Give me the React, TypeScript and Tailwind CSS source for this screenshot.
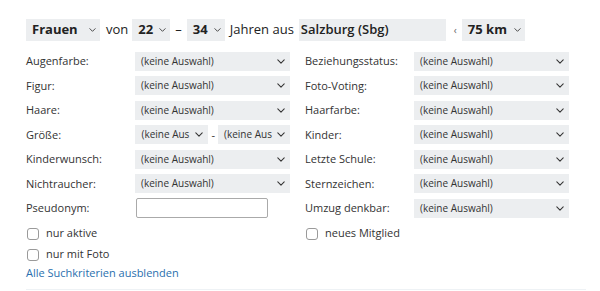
import React from 'react';

const font = { fontFamily: '"Open Sans", "Noto Sans", sans-serif' };

function Chevron({ className = '' }: { className?: string }) {
  return (
    <svg viewBox="0 0 10 6" className={`shrink-0 ${className}`} fill="none">
      <path d="M1 1l4 4 4-4" stroke="#333" strokeWidth="1.3" strokeLinecap="round" strokeLinejoin="round" />
    </svg>
  );
}

function TopSelect({ value, width }: { value: string; width: string }) {
  return (
    <div className={`flex h-[22px] ${width} items-center justify-between bg-[#eceef0] pl-[6px] pr-[4px] text-[13px] font-bold text-[#222]`}>
      <span>{value}</span>
      <Chevron className="w-[7px] h-[4px]" />
    </div>
  );
}

function SmallSelect({ width = 'w-[155px]', text = '(keine Auswahl)' }: { width?: string; text?: string }) {
  return (
    <div className={`flex h-[19px] ${width} items-center justify-between overflow-hidden bg-[#eceef0] pl-[6px] pr-[5px] text-[10px] text-[#333]`}>
      <span className="whitespace-nowrap">{text}</span>
      <Chevron className="w-[8px] h-[5px]" />
    </div>
  );
}

const left = ['Augenfarbe:', 'Figur:', 'Haare:', 'Größe:', 'Kinderwunsch:', 'Nichtraucher:'];
const right = ['Beziehungsstatus:', 'Foto-Voting:', 'Haarfarbe:', 'Kinder:', 'Letzte Schule:', 'Sternzeichen:', 'Umzug denkbar:'];

function Row({ label, children }: { label: string; children: React.ReactNode }) {
  return (
    <div className="flex h-[24.5px] items-center">
      <div className="w-[109px] text-[11px] text-[#333]">{label}</div>
      {children}
    </div>
  );
}

function Check({ label }: { label: string }) {
  return (
    <label className="flex h-[16px] items-center gap-[7px] text-[11px] text-[#333]">
      <span className="ml-[1px] h-[12px] w-[12px] rounded-[3px] border border-[#9a9a9a] bg-white" />
      {label}
    </label>
  );
}

export default function App() {
  return (
    <div style={font} className="w-[600px] h-[291px] bg-white px-[26px] pt-[19px] text-[#333]">
      <div className="flex items-center text-[13px] text-[#222]">
        <TopSelect value="Frauen" width="w-[74px]" />
        <span className="ml-[6px] mr-[4px]">von</span>
        <TopSelect value="22" width="w-[38px]" />
        <span className="mx-[5px]">–</span>
        <TopSelect value="34" width="w-[38px]" />
        <span className="ml-[5px] mr-[5px]">Jahren aus</span>
        <div className="flex h-[22px] w-[147px] items-center bg-[#eceef0] px-[2px] text-[13px] font-semibold text-[#222]">
          Salzburg (Sbg)
        </div>
        <span className="ml-[8px] mr-[5px] text-[10px] text-[#666]">‹</span>
        <TopSelect value="75 km" width="w-[63px]" />
      </div>

      <div className="mt-[8px] grid grid-cols-[264px_265px] gap-x-[15px]">
        <div className="flex flex-col">
          {left.map((l) =>
            l === 'Größe:' ? (
              <Row key={l} label={l}>
                <div className="ml-[2px] flex items-center">
                  <SmallSelect width="w-[73px]" text="(keine Aus" />
                  <span className="mx-[3px] text-[11px]">-</span>
                  <SmallSelect width="w-[72px]" text="(keine Aus" />
                </div>
              </Row>
            ) : (
              <Row key={l} label={l}>
                <SmallSelect />
              </Row>
            )
          )}
          <Row label="Pseudonym:">
            <div className="ml-[1px] h-[20px] w-[132px] rounded-[2px] border border-[#aaa] bg-white" />
          </Row>
          <div className="mt-[5px] flex flex-col gap-[5px]">
            <Check label="nur aktive" />
            <Check label="nur mit Foto" />
          </div>
          <a className="mt-[2px] text-[11px] text-[#2a6fae]">Alle Suchkriterien ausblenden</a>
        </div>
        <div className="flex flex-col">
          {right.map((r) => (
            <Row key={r} label={r}>
              <SmallSelect />
            </Row>
          ))}
          <div className="mt-[5px]">
            <Check label="neues Mitglied" />
          </div>
        </div>
      </div>
      <div className="mt-[8px] h-px w-[560px] bg-[#eef2f5]" />
    </div>
  );
}
